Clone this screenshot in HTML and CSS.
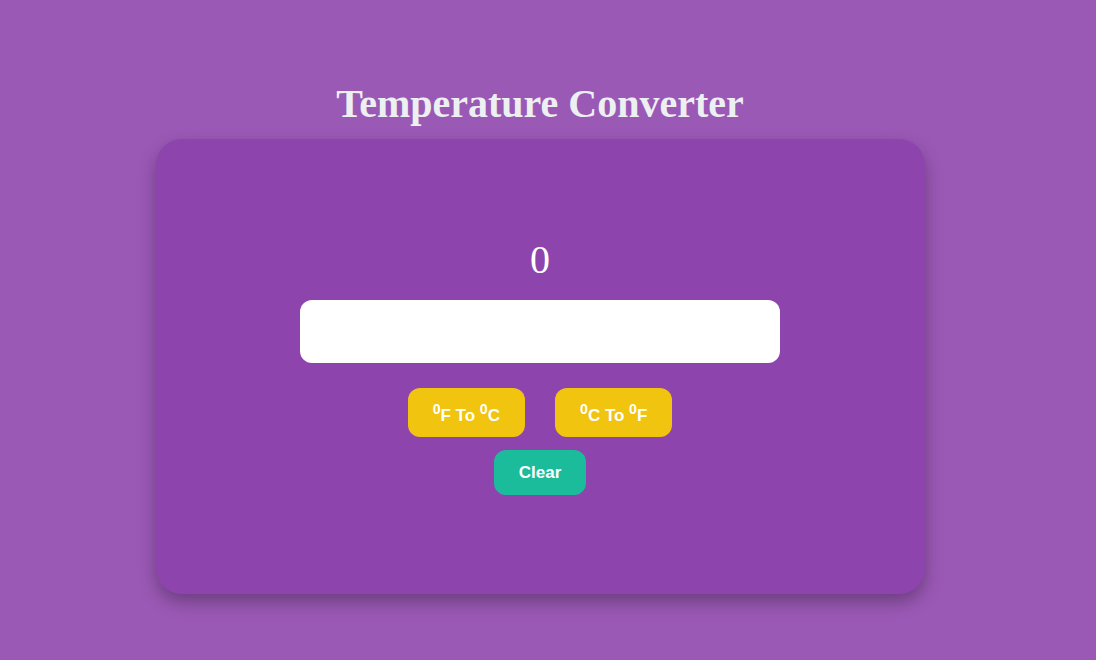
FILE: index.html
```html
<!DOCTYPE html>
<html lang="en">
<head>
<meta charset="utf-8">
<title>Temperature Converter</title>
<link rel="stylesheet" href="styles.css">
</head>
<body>
<main class="page">
  <h1 class="title">Temperature Converter</h1>
  <section class="card">
    <div class="result">0</div>
    <input class="field" type="text" aria-label="Temperature">
    <div class="actions">
      <button class="btn btn-yellow"><sup>0</sup>F To <sup>0</sup>C</button>
      <button class="btn btn-yellow"><sup>0</sup>C To <sup>0</sup>F</button>
    </div>
    <button class="btn btn-green">Clear</button>
  </section>
</main>
</body>
</html>
```
FILE: styles.css
```css
html, body {
  margin: 0;
  padding: 0;
  background: #9b59b6;
  height: 100%;
}
.page {
  width: calc(100% - 16px);
  padding-top: 81px;
  display: flex;
  flex-direction: column;
  align-items: center;
  font-family: "Liberation Serif", "Times New Roman", serif;
}
.title {
  margin: 0 0 12px;
  font-size: 40px;
  font-weight: bold;
  color: #ecf0f1;
  line-height: 46px;
}
.card {
  box-sizing: border-box;
  width: 769px;
  height: 455px;
  padding-top: 98px;
  background: #8e44ad;
  border-radius: 26px;
  box-shadow: 0 8px 18px rgba(0, 0, 0, 0.3);
  display: flex;
  flex-direction: column;
  align-items: center;
}
.result {
  font-size: 40px;
  line-height: 46px;
  color: #ffffff;
}
.field {
  box-sizing: border-box;
  margin-top: 17px;
  width: 480px;
  height: 63px;
  border: none;
  border-radius: 12px;
  background: #ffffff;
  outline: none;
  font-size: 20px;
  padding: 0 16px;
}
.actions {
  margin-top: 25px;
  display: flex;
  gap: 30px;
}
.btn {
  border: none;
  border-radius: 12px;
  color: #ffffff;
  font-family: "Liberation Sans", Arial, sans-serif;
  font-weight: bold;
  font-size: 17px;
  padding: 13px 25px;
  cursor: pointer;
}
.btn-yellow {
  background: #f1c40f;
  height: 49px;
}
.btn-green {
  margin-top: 13px;
  background: #1abc9c;
  height: 45px;
}
```
